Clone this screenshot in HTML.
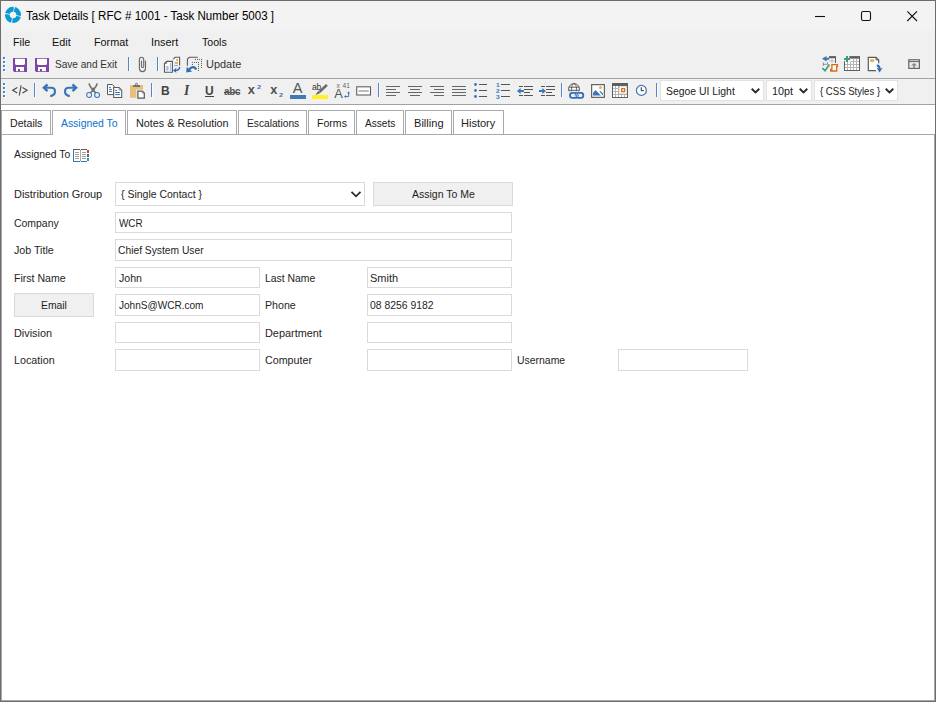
<!DOCTYPE html>
<html><head><meta charset="utf-8"><title>Task Details</title><style>
html,body{margin:0;padding:0;background:#fff;}
#w{position:relative;width:936px;height:702px;overflow:hidden;background:#fff;font-family:"Liberation Sans",sans-serif;}
.t{position:absolute;white-space:pre;line-height:16px;height:16px;transform-origin:0 0;}
.b{position:absolute;box-sizing:content-box;overflow:visible;}
</style></head><body><div id="w">
<div class="b" style="left:0px;top:0px;width:936px;height:31px;background:#f3f3f3;"></div>
<div class="b" style="left:0px;top:31px;width:936px;height:47px;background:#f0f0f0;"></div>
<div class="b" style="left:0px;top:78px;width:936px;height:1px;background:#a4a4a4;"></div>
<div class="b" style="left:0px;top:79px;width:936px;height:25px;background:#f0f0f0;"></div>
<div class="b" style="left:0px;top:104px;width:936px;height:1px;background:#a2a2a2;"></div>
<div class="b" style="left:2px;top:134px;width:932px;height:1px;background:#a9a9a9;"></div>
<span class="t" style="left:25.77px;top:7.67px;font-size:12.5px;color:#000;transform:scaleX(0.9258);">Task Details [ RFC # 1001 - Task Number 5003 ]</span>
<span class="t" style="left:12.82px;top:34.19px;font-size:11px;color:#111;transform:scaleX(0.9725);">File</span>
<span class="t" style="left:51.91px;top:34.19px;font-size:11px;color:#111;transform:scaleX(0.9833);">Edit</span>
<span class="t" style="left:93.52px;top:34.19px;font-size:11px;color:#111;transform:scaleX(0.9823);">Format</span>
<span class="t" style="left:150.81px;top:34.19px;font-size:11px;color:#111;transform:scaleX(0.9905);">Insert</span>
<span class="t" style="left:201.61px;top:34.19px;font-size:11px;color:#111;transform:scaleX(0.9622);">Tools</span>
<span class="t" style="left:54.94px;top:56.19px;font-size:11px;color:#333;transform:scaleX(0.9153);">Save and Exit</span>
<span class="t" style="left:206.20px;top:56.19px;font-size:11px;color:#333;transform:scaleX(0.9942);">Update</span>
<div class="b" style="left:1px;top:110px;width:48px;height:23px;background:#fff;border:1px solid #a9a9a9;"></div>
<span class="t" style="left:9.93px;top:115.19px;font-size:11px;color:#222;transform:scaleX(0.9645);">Details</span>
<div class="b" style="left:52px;top:110px;width:72px;height:24px;background:#fff;border:1px solid #a9a9a9;border-bottom:none"></div>
<span class="t" style="left:61.10px;top:115.19px;font-size:11px;color:#0a72d0;transform:scaleX(0.9444);">Assigned To</span>
<div class="b" style="left:127px;top:110px;width:108px;height:23px;background:#fff;border:1px solid #a9a9a9;"></div>
<span class="t" style="left:136.01px;top:115.19px;font-size:11px;color:#222;transform:scaleX(0.9838);">Notes &amp; Resolution</span>
<div class="b" style="left:238px;top:110px;width:67px;height:23px;background:#fff;border:1px solid #a9a9a9;"></div>
<span class="t" style="left:246.57px;top:115.19px;font-size:11px;color:#222;transform:scaleX(0.9273);">Escalations</span>
<div class="b" style="left:308px;top:110px;width:45px;height:23px;background:#fff;border:1px solid #a9a9a9;"></div>
<span class="t" style="left:316.74px;top:115.19px;font-size:11px;color:#222;transform:scaleX(0.9599);">Forms</span>
<div class="b" style="left:356px;top:110px;width:46px;height:23px;background:#fff;border:1px solid #a9a9a9;"></div>
<span class="t" style="left:365.30px;top:115.19px;font-size:11px;color:#222;transform:scaleX(0.9158);">Assets</span>
<div class="b" style="left:405px;top:110px;width:45px;height:23px;background:#fff;border:1px solid #a9a9a9;"></div>
<span class="t" style="left:413.59px;top:115.19px;font-size:11px;color:#222;transform:scaleX(1.0072);">Billing</span>
<div class="b" style="left:453px;top:110px;width:49px;height:23px;background:#fff;border:1px solid #a9a9a9;"></div>
<span class="t" style="left:460.80px;top:115.19px;font-size:11px;color:#222;transform:scaleX(1.0015);">History</span>
<span class="t" style="left:14.40px;top:146.19px;font-size:11px;color:#1e1e1e;transform:scaleX(0.9410);">Assigned To</span>
<span class="t" style="left:13.90px;top:186.19px;font-size:11px;color:#1e1e1e;transform:scaleX(0.9948);">Distribution Group</span>
<span class="t" style="left:13.88px;top:215.19px;font-size:11px;color:#1e1e1e;transform:scaleX(0.9495);">Company</span>
<span class="t" style="left:13.75px;top:242.19px;font-size:11px;color:#1e1e1e;transform:scaleX(0.9690);">Job Title</span>
<span class="t" style="left:13.84px;top:270.19px;font-size:11px;color:#1e1e1e;transform:scaleX(0.9580);">First Name</span>
<span class="t" style="left:13.61px;top:325.19px;font-size:11px;color:#1e1e1e;transform:scaleX(0.9878);">Division</span>
<span class="t" style="left:13.82px;top:352.19px;font-size:11px;color:#1e1e1e;transform:scaleX(0.9775);">Location</span>
<span class="t" style="left:265.15px;top:270.19px;font-size:11px;color:#1e1e1e;transform:scaleX(0.9459);">Last Name</span>
<span class="t" style="left:265.13px;top:297.19px;font-size:11px;color:#1e1e1e;transform:scaleX(0.9655);">Phone</span>
<span class="t" style="left:265.11px;top:325.19px;font-size:11px;color:#1e1e1e;transform:scaleX(0.9894);">Department</span>
<span class="t" style="left:265.47px;top:352.19px;font-size:11px;color:#1e1e1e;transform:scaleX(0.9727);">Computer</span>
<span class="t" style="left:516.74px;top:352.19px;font-size:11px;color:#1e1e1e;transform:scaleX(0.9484);">Username</span>
<div class="b" style="left:115px;top:182px;width:248px;height:22px;background:#fff;border:1px solid #dadada;"></div>
<div class="b" style="left:373px;top:182px;width:138px;height:22px;background:#f0f0f0;border:1px solid #dadada;"></div>
<div class="b" style="left:115px;top:212px;width:395px;height:19px;background:#fff;border:1px solid #dadada;"></div>
<div class="b" style="left:115px;top:239px;width:395px;height:20px;background:#fff;border:1px solid #dadada;"></div>
<div class="b" style="left:115px;top:267px;width:143px;height:19px;background:#fff;border:1px solid #dadada;"></div>
<div class="b" style="left:367px;top:267px;width:143px;height:19px;background:#fff;border:1px solid #dadada;"></div>
<div class="b" style="left:14px;top:293px;width:78px;height:22px;background:#f0f0f0;border:1px solid #dadada;"></div>
<div class="b" style="left:115px;top:294px;width:143px;height:20px;background:#fff;border:1px solid #dadada;"></div>
<div class="b" style="left:367px;top:294px;width:143px;height:20px;background:#fff;border:1px solid #dadada;"></div>
<div class="b" style="left:115px;top:322px;width:143px;height:19px;background:#fff;border:1px solid #dadada;"></div>
<div class="b" style="left:367px;top:322px;width:143px;height:19px;background:#fff;border:1px solid #dadada;"></div>
<div class="b" style="left:115px;top:349px;width:143px;height:20px;background:#fff;border:1px solid #dadada;"></div>
<div class="b" style="left:367px;top:349px;width:143px;height:20px;background:#fff;border:1px solid #dadada;"></div>
<div class="b" style="left:618px;top:349px;width:128px;height:20px;background:#fff;border:1px solid #dadada;"></div>
<span class="t" style="left:120.66px;top:186.19px;font-size:11px;color:#1e1e1e;transform:scaleX(0.9528);">{ Single Contact }</span>
<span class="t" style="left:411.90px;top:186.19px;font-size:11px;color:#1e1e1e;transform:scaleX(0.9564);">Assign To Me</span>
<span class="t" style="left:118.75px;top:215.19px;font-size:11px;color:#1e1e1e;transform:scaleX(0.9010);">WCR</span>
<span class="t" style="left:118.29px;top:242.19px;font-size:11px;color:#1e1e1e;transform:scaleX(0.9341);">Chief System User</span>
<span class="t" style="left:118.66px;top:270.19px;font-size:11px;color:#1e1e1e;transform:scaleX(0.9631);">John</span>
<span class="t" style="left:370.30px;top:270.19px;font-size:11px;color:#1e1e1e;transform:scaleX(0.9981);">Smith</span>
<span class="t" style="left:41.05px;top:297.19px;font-size:11px;color:#1e1e1e;transform:scaleX(0.9421);">Email</span>
<span class="t" style="left:118.66px;top:297.19px;font-size:11px;color:#1e1e1e;transform:scaleX(0.9127);">JohnS@WCR.com</span>
<span class="t" style="left:370.42px;top:297.19px;font-size:11px;color:#1e1e1e;transform:scaleX(0.9450);">08 8256 9182</span>
<svg class="b" style="left:350px;top:189px" width="12" height="10" viewBox="0 0 12 10"><path d="M1.5 2.8 L6 7.3 L10.5 2.8" fill="none" stroke="#2b2b2b" stroke-width="1.8"/></svg>
<svg class="b" style="left:3px;top:5px" width="20" height="20" viewBox="0 0 20 20"><circle cx="10" cy="9.95" r="5.7" fill="none" stroke="#0a9ad6" stroke-width="4.8"/><g fill="#f3f3f3"><path transform="rotate(0 10 9.95)" d="M10.1 6.9 L10.95 6.9 L11.35 4.3 L12.5 1.2 L10.7 1.2 L10.75 4 Z"/><path transform="rotate(90 10 9.95)" d="M10.1 6.9 L10.95 6.9 L11.35 4.3 L12.5 1.2 L10.7 1.2 L10.75 4 Z"/><path transform="rotate(180 10 9.95)" d="M10.1 6.9 L10.95 6.9 L11.35 4.3 L12.5 1.2 L10.7 1.2 L10.75 4 Z"/><path transform="rotate(270 10 9.95)" d="M10.1 6.9 L10.95 6.9 L11.35 4.3 L12.5 1.2 L10.7 1.2 L10.75 4 Z"/></g></svg>
<svg class="b" style="left:810px;top:6px" width="120" height="20" viewBox="0 0 120 20"><g fill="none" stroke="#111" stroke-width="1.1"><line x1="5" y1="10.5" x2="15" y2="10.5"/><rect x="51.5" y="5.5" width="9" height="9" rx="1.6"/><path d="M97.3 5.3 L107 15 M107 5.3 L97.3 15"/></g></svg>
<div class="b" style="left:3px;top:57px;width:2px;height:2px;background:#3f8ad8;"></div>
<div class="b" style="left:4px;top:59px;width:2px;height:1px;background:rgba(255,255,255,0.9);"></div>
<div class="b" style="left:5px;top:58px;width:1px;height:1px;background:rgba(255,255,255,0.9);"></div>
<div class="b" style="left:3px;top:61px;width:2px;height:2px;background:#3f8ad8;"></div>
<div class="b" style="left:4px;top:63px;width:2px;height:1px;background:rgba(255,255,255,0.9);"></div>
<div class="b" style="left:5px;top:62px;width:1px;height:1px;background:rgba(255,255,255,0.9);"></div>
<div class="b" style="left:3px;top:65px;width:2px;height:2px;background:#3f8ad8;"></div>
<div class="b" style="left:4px;top:67px;width:2px;height:1px;background:rgba(255,255,255,0.9);"></div>
<div class="b" style="left:5px;top:66px;width:1px;height:1px;background:rgba(255,255,255,0.9);"></div>
<div class="b" style="left:3px;top:69px;width:2px;height:2px;background:#3f8ad8;"></div>
<div class="b" style="left:4px;top:71px;width:2px;height:1px;background:rgba(255,255,255,0.9);"></div>
<div class="b" style="left:5px;top:70px;width:1px;height:1px;background:rgba(255,255,255,0.9);"></div>
<svg class="b" style="left:13px;top:58px" width="14" height="14" viewBox="0 0 14 14"><path d="M0 0H14V14H1.2L0 12.8Z" fill="#8144a8"/><path d="M2 0.8H12V6L11 7H3L2 6Z" fill="#fff"/><rect x="3" y="9" width="8" height="4.2" fill="#fff"/><rect x="5" y="11" width="2" height="2.2" fill="#8144a8"/></svg>
<svg class="b" style="left:35px;top:58px" width="14" height="14" viewBox="0 0 14 14"><path d="M0 0H14V14H1.2L0 12.8Z" fill="#8144a8"/><path d="M2 0.8H12V6L11 7H3L2 6Z" fill="#fff"/><rect x="3" y="9" width="8" height="4.2" fill="#fff"/><rect x="5" y="11" width="2" height="2.2" fill="#8144a8"/></svg>
<div class="b" style="left:129px;top:58px;width:1px;height:14px;background:rgba(255,255,255,0.75);"></div>
<div class="b" style="left:128px;top:57px;width:1px;height:14px;background:#5a82cd;"></div>
<div class="b" style="left:158px;top:58px;width:1px;height:14px;background:rgba(255,255,255,0.75);"></div>
<div class="b" style="left:157px;top:57px;width:1px;height:14px;background:#5a82cd;"></div>
<svg class="b" style="left:136px;top:55px" width="14" height="19" viewBox="0 0 14 19"><path d="M9.5 6 V13.6 a3.05 3.05 0 0 1 -6.1 0 V4.4 a2.15 2.15 0 0 1 4.3 0 V11.4 a1.1 1.1 0 0 1 -2.2 0 V6.1" fill="none" stroke="#6a6a6a" stroke-width="1.15" stroke-linecap="round"/></svg>
<svg class="b" style="left:163px;top:56px" width="19" height="18" viewBox="0 0 19 18"><path d="M10.3 3.2 L12.2 1.3 H16.6 V9.5" fill="#fff" stroke="#5a5a5a" stroke-width="1.1"/><rect x="13.2" y="3.1" width="1.8" height="1.8" fill="#e8a84c"/><rect x="12" y="6" width="3" height="1.8" fill="#e8a84c"/><rect x="11.2" y="9" width="3.8" height="0.8" fill="#999"/><path d="M1.5 16.2 V7.4 L3.6 5.3 H9.4 V16.2 Z" fill="#fff" stroke="#5a5a5a" stroke-width="1.15"/><path d="M3.7 5.5 V7.5 H1.7" fill="none" stroke="#5a5a5a" stroke-width="0.7"/><rect x="3.1" y="10" width="2.4" height="4.8" fill="#a9c4e4"/><rect x="6.8" y="7" width="1.2" height="7.8" fill="#a9c4e4"/><path d="M16.6 11 C16.6 13.6 15.3 14.4 12.2 14.4" fill="none" stroke="#2f6db5" stroke-width="1.5"/><path d="M10 14.4 L13.4 11.8 L12.8 14.4 L13.4 17 Z" fill="#2f6db5"/></svg>
<svg class="b" style="left:185px;top:56px" width="19" height="18" viewBox="0 0 19 18"><path d="M2.4 9.8 V3.2 L4.3 1.3 H12.8" fill="none" stroke="#5a5a5a" stroke-width="1.1"/><g fill="#555"><rect x="9.9" y="2.9" width="1" height="1"/><rect x="12.0" y="2.9" width="1" height="1"/><rect x="14.0" y="2.9" width="1" height="1"/><rect x="16.0" y="2.9" width="1" height="1"/><rect x="16.0" y="4.9" width="1" height="1"/><rect x="16.0" y="6.9" width="1" height="1"/><rect x="16.0" y="8.9" width="1" height="1"/><rect x="16.0" y="11.0" width="1" height="1"/><rect x="6.9" y="5.9" width="1" height="1"/><rect x="9.0" y="5.9" width="1" height="1"/><rect x="11.0" y="5.9" width="1" height="1"/><rect x="13.0" y="5.9" width="1" height="1"/><rect x="13.0" y="7.9" width="1" height="1"/><rect x="13.0" y="9.9" width="1" height="1"/><rect x="13.0" y="11.9" width="1" height="1"/><rect x="13.0" y="13.9" width="1" height="1"/><rect x="6.9" y="8.0" width="1" height="1"/></g><path d="M11.3 13.5 C9.8 10.3 6.2 10.1 3.6 14.2" fill="none" stroke="#2f6db5" stroke-width="2.2"/><path d="M1.2 16.6 L1.7 10.8 L4 13 L7.2 15.4 Z" fill="#2f6db5"/></svg>
<svg class="b" style="left:821px;top:55px" width="18" height="18" viewBox="0 0 18 18"><rect x="8" y="1.1" width="7" height="2.3" fill="#5e5e5e"/><path d="M14.5 3 V8" stroke="#5e5e5e" stroke-width="1"/><rect x="8.3" y="3.6" width="5.6" height="4.2" fill="#fff"/><path d="M8 6H14 M11 3.4V8" stroke="#aaa" stroke-width="0.8"/><path d="M2.3 7.3V11 M2.3 9.3H6.5 M6.5 7.3V9.3" stroke="#777" stroke-width="0.8" fill="none"/><path d="M1 3.7 L5.6 0.9 V2.7 H8.2 V4.7 H5.6 V6.5 Z" fill="#3a75b8"/><path d="M1.3 13 L4 15.7 L8.4 9.6" fill="none" stroke="#3f9a7c" stroke-width="1.7"/><path d="M10.9 14.5 V9.7 H16.4 V11.4 H15.7 V16 H9.7 V14.5 Z" fill="#fff" stroke="#e06a10" stroke-width="1.3"/></svg>
<svg class="b" style="left:843px;top:55px" width="18" height="18" viewBox="0 0 18 18"><rect x="1" y="3.5" width="16" height="12.5" fill="#b5b5b5"/><rect x="0" y="0" width="8" height="7" fill="#f0f0f0"/><rect x="6.3" y="1.1" width="10.7" height="2.4" fill="#5e5e5e"/><g fill="#fff"><rect x="8" y="4" width="2" height="2"/><rect x="11" y="4" width="2" height="2"/><rect x="14" y="4" width="2" height="2"/><rect x="2" y="7" width="2" height="2"/><rect x="5" y="7" width="2" height="2"/><rect x="8" y="7" width="2" height="2"/><rect x="11" y="7" width="2" height="2"/><rect x="14" y="7" width="2" height="2"/><rect x="2" y="10" width="2" height="2"/><rect x="5" y="10" width="2" height="2"/><rect x="8" y="10" width="2" height="2"/><rect x="11" y="10" width="2" height="2"/><rect x="14" y="10" width="2" height="2"/><rect x="2" y="13" width="2" height="2"/><rect x="5" y="13" width="2" height="2"/><rect x="8" y="13" width="2" height="2"/><rect x="11" y="13" width="2" height="2"/><rect x="14" y="13" width="2" height="2"/></g><path d="M1.5 6.2 V15.5 H16.5 V3" fill="none" stroke="#5e5e5e" stroke-width="1"/><path d="M1 3H7V5H1Z M3 1H5V7H3Z" fill="#3f9a7c"/></svg>
<svg class="b" style="left:867px;top:56px" width="17" height="18" viewBox="0 0 17 18"><path d="M1.3 1.3 H9 L11.7 4 V7.3 H9.5 V14.6 H1.3 Z" fill="#fff"/><path d="M11.7 7.3 V4 L9 1.3 H1.3 V14.6 H9" fill="none" stroke="#5a5a5a" stroke-width="1.2"/><path d="M9 1.3 V4 H11.7" fill="none" stroke="#5a5a5a" stroke-width="0.9"/><rect x="3.1" y="3.2" width="4.1" height="2.7" fill="#e8b256"/><path d="M9.8 9.4 C12.4 9.4 12.6 11 12.6 13" fill="none" stroke="#2f6db5" stroke-width="2"/><path d="M9.7 11.7 L12.6 16.4 L15.5 11.7 L12.6 12.9 Z" fill="#2f6db5"/></svg>
<svg class="b" style="left:907px;top:58px" width="15" height="12" viewBox="0 0 15 12"><rect x="1.8" y="3.6" width="10.6" height="6.6" fill="#e9e9e9"/><rect x="1.8" y="1.8" width="10.6" height="8.6" fill="none" stroke="#666" stroke-width="1.2"/><path d="M1.8 3.6H12.4" stroke="#666" stroke-width="1"/><path d="M7.1 5 L10 7.4 H7.9 V10 H6.3 V7.4 H4.2 Z" fill="#868686"/></svg>
<div class="b" style="left:3px;top:83px;width:2px;height:2px;background:#3f8ad8;"></div>
<div class="b" style="left:4px;top:85px;width:2px;height:1px;background:rgba(255,255,255,0.9);"></div>
<div class="b" style="left:5px;top:84px;width:1px;height:1px;background:rgba(255,255,255,0.9);"></div>
<div class="b" style="left:3px;top:87px;width:2px;height:2px;background:#3f8ad8;"></div>
<div class="b" style="left:4px;top:89px;width:2px;height:1px;background:rgba(255,255,255,0.9);"></div>
<div class="b" style="left:5px;top:88px;width:1px;height:1px;background:rgba(255,255,255,0.9);"></div>
<div class="b" style="left:3px;top:91px;width:2px;height:2px;background:#3f8ad8;"></div>
<div class="b" style="left:4px;top:93px;width:2px;height:1px;background:rgba(255,255,255,0.9);"></div>
<div class="b" style="left:5px;top:92px;width:1px;height:1px;background:rgba(255,255,255,0.9);"></div>
<div class="b" style="left:3px;top:95px;width:2px;height:2px;background:#3f8ad8;"></div>
<div class="b" style="left:4px;top:97px;width:2px;height:1px;background:rgba(255,255,255,0.9);"></div>
<div class="b" style="left:5px;top:96px;width:1px;height:1px;background:rgba(255,255,255,0.9);"></div>
<svg class="b" style="left:10px;top:83px" width="20" height="15" viewBox="0 0 20 15"><path d="M7.3 4.4 L2.7 7.2 L7.3 10 M11.1 2.3 L9.3 12.5 M12.5 4.4 L17.1 7.2 L12.5 10" fill="none" stroke="#484848" stroke-width="1.15"/></svg>
<div class="b" style="left:35px;top:84px;width:1px;height:14px;background:rgba(255,255,255,0.75);"></div>
<div class="b" style="left:34px;top:83px;width:1px;height:14px;background:#5a82cd;"></div>
<svg class="b" style="left:41px;top:82px" width="16" height="16" viewBox="0 0 16 16"><g fill="none" stroke="#3a75b8"><path d="M6.5 2.5 L2.9 5.8 L6.5 9.1" stroke-width="2.4"/><path d="M3 5.8 H10.3 C13.2 5.8 14 7.8 14 9.6 C14 12 12 13.7 9.2 14.1" stroke-width="2.1"/></g></svg>
<svg class="b" style="left:63px;top:82px" width="16" height="16" viewBox="0 0 16 16"><g transform="translate(16,0) scale(-1,1)" fill="none" stroke="#3a75b8"><path d="M6.5 2.5 L2.9 5.8 L6.5 9.1" stroke-width="2.4"/><path d="M3 5.8 H10.3 C13.2 5.8 14 7.8 14 9.6 C14 12 12 13.7 9.2 14.1" stroke-width="2.1"/></g></svg>
<svg class="b" style="left:85px;top:82px" width="17" height="17" viewBox="0 0 17 17"><path d="M4 1.3 C4.6 4 7 7.2 10.8 10.9 M12.2 1.3 C11.6 4 9.2 7.2 5.4 10.9" fill="none" stroke="#6e6e6e" stroke-width="1.6"/><ellipse cx="8.1" cy="7.4" rx="1.5" ry="2" fill="#6e6e6e"/><circle cx="4.1" cy="13" r="2.45" fill="none" stroke="#3a75b8" stroke-width="1.05"/><circle cx="12.1" cy="13" r="2.45" fill="none" stroke="#3a75b8" stroke-width="1.05"/></svg>
<svg class="b" style="left:106px;top:83px" width="17" height="16" viewBox="0 0 17 16"><path d="M1.5 1.5 H6.4 L8 3.1 V11.6 H1.5 Z" fill="#fff" stroke="#5a5a5a" stroke-width="1"/><path d="M3 4.4H4.8 M3 6.4H5.9 M3 8.4H5.9" stroke="#2f6db5" stroke-width="1"/><path d="M7.7 4.5 H13 L15.7 7.2 V14.5 H7.7 Z" fill="#fff" stroke="#5a5a5a" stroke-width="1.05"/><path d="M13 4.7 V7.2 H15.5" fill="none" stroke="#777" stroke-width="0.7"/><path d="M9.2 7.5H11 M9.2 9.5H13.9 M9.2 11.6H13.9" stroke="#2f6db5" stroke-width="1"/></svg>
<svg class="b" style="left:129px;top:82px" width="17" height="18" viewBox="0 0 17 18"><rect x="1" y="3.1" width="13" height="12.7" fill="#e8bf7a"/><path d="M6.6 3.2 V2.1 a0.9 0.9 0 0 1 1.8 0 V3.2" fill="none" stroke="#6a6a6a" stroke-width="0.9"/><rect x="4.1" y="3.1" width="7" height="1.8" fill="#6a6a6a"/><path d="M8.9 9 H13.2 L15.3 11.1 V16 H8.9 Z" fill="#f0f0f0" stroke="#f0f0f0" stroke-width="3.2"/><path d="M8.9 9 H13.2 L15.3 11.1 V16 H8.9 Z" fill="#fff" stroke="#5a5a5a" stroke-width="1.25"/><path d="M13.2 9.2 V11.1 H15.1" fill="none" stroke="#777" stroke-width="0.7"/></svg>
<div class="b" style="left:152px;top:84px;width:1px;height:14px;background:rgba(255,255,255,0.75);"></div>
<div class="b" style="left:151px;top:83px;width:1px;height:14px;background:#5a82cd;"></div>
<span class="t" style="left:161px;top:82.5px;font-size:12px;font-weight:bold;color:#444;">B</span>
<span class="t" style="left:184.2px;top:83.2px;font-size:15px;font-weight:bold;font-style:italic;color:#444;transform:scale(0.91);font-family:'Liberation Serif',serif;">I</span>
<span class="t" style="left:205px;top:82.5px;font-size:12px;font-weight:bold;color:#444;letter-spacing:-0.3px">U</span>
<div class="b" style="left:205px;top:96px;width:9px;height:1px;background:#444;"></div>
<span class="t" style="left:224px;top:83.6px;font-size:10px;font-weight:bold;color:#555;letter-spacing:-0.35px;text-decoration:line-through">abc</span>
<span class="t" style="left:247.8px;top:82.2px;font-size:12.8px;font-weight:bold;color:#505050;">x</span>
<span class="t" style="left:256.7px;top:79px;font-size:6.2px;font-weight:bold;color:#3a75b8;transform:scaleX(1.2)">2</span>
<span class="t" style="left:270.2px;top:82.2px;font-size:12.8px;font-weight:bold;color:#505050;">x</span>
<span class="t" style="left:278.8px;top:87px;font-size:6px;font-weight:bold;color:#3a75b8;transform:scaleX(1.2)">2</span>
<span class="t" style="left:292.7px;top:80.2px;font-size:14.5px;color:#555;">A</span>
<div class="b" style="left:290px;top:95px;width:16px;height:4px;background:#4178b8;"></div>
<span class="t" style="left:312px;top:79.3px;font-size:8.6px;color:#333;letter-spacing:-0.3px">ab</span>
<svg class="b" style="left:314px;top:83px" width="16" height="13" viewBox="0 0 16 13"><path d="M12.9 1.9 L5.6 8.9" stroke="#686868" stroke-width="2.7" stroke-linecap="butt"/><path d="M4.3 7.9 L6.3 10 L1.4 11.9Z" fill="#5a5a5a"/></svg>
<div class="b" style="left:312px;top:95px;width:16px;height:4px;background:#fff21f;"></div>
<span class="t" style="left:334.3px;top:86.1px;font-size:12.8px;color:#555;">A</span>
<span class="t" style="left:336.6px;top:78.2px;font-size:6.6px;color:#6a6a6a;">x</span>
<span class="t" style="left:342.5px;top:78.4px;font-size:6.6px;color:#5e5e5e;">41</span>
<svg class="b" style="left:343px;top:89.7px" width="9" height="10" viewBox="0 0 9 10"><path d="M5.6 2.6 V6.6 H2.2" fill="none" stroke="#3a75b8" stroke-width="1"/><path d="M4.1 3.3 L5.6 1.4 L7.1 3.3Z M2.8 5.1 L1 6.6 L2.8 8.1Z" fill="#3a75b8"/></svg>
<svg class="b" style="left:355px;top:85px" width="18" height="12" viewBox="0 0 18 12"><rect x="1.7" y="1.8" width="13.8" height="8.2" fill="#fdfdfd" stroke="#5c5c5c" stroke-width="1.05"/><path d="M3.5 6H13.7" stroke="#9a9a9a" stroke-width="1.3"/></svg>
<div class="b" style="left:379px;top:84px;width:1px;height:14px;background:rgba(255,255,255,0.75);"></div>
<div class="b" style="left:378px;top:83px;width:1px;height:14px;background:#5a82cd;"></div>
<div class="b" style="left:386px;top:86px;width:14px;height:1px;background:#666;"></div>
<div class="b" style="left:408px;top:86px;width:14px;height:1px;background:#666;"></div>
<div class="b" style="left:430px;top:86px;width:14px;height:1px;background:#666;"></div>
<div class="b" style="left:452px;top:86px;width:14px;height:1px;background:#666;"></div>
<div class="b" style="left:386px;top:89px;width:10px;height:1px;background:#666;"></div>
<div class="b" style="left:410px;top:89px;width:10px;height:1px;background:#666;"></div>
<div class="b" style="left:434px;top:89px;width:10px;height:1px;background:#666;"></div>
<div class="b" style="left:452px;top:89px;width:14px;height:1px;background:#666;"></div>
<div class="b" style="left:386px;top:92px;width:14px;height:1px;background:#666;"></div>
<div class="b" style="left:408px;top:92px;width:14px;height:1px;background:#666;"></div>
<div class="b" style="left:430px;top:92px;width:14px;height:1px;background:#666;"></div>
<div class="b" style="left:452px;top:92px;width:14px;height:1px;background:#666;"></div>
<div class="b" style="left:386px;top:95px;width:10px;height:1px;background:#666;"></div>
<div class="b" style="left:410px;top:95px;width:10px;height:1px;background:#666;"></div>
<div class="b" style="left:434px;top:95px;width:10px;height:1px;background:#666;"></div>
<div class="b" style="left:452px;top:95px;width:14px;height:1px;background:#666;"></div>
<svg class="b" style="left:473.8px;top:83px" width="3" height="3" viewBox="0 0 3 3"><circle cx="1.5" cy="1.5" r="1.4" fill="#3a75b8"/></svg>
<div class="b" style="left:479px;top:84px;width:8px;height:1px;background:#555;"></div>
<div class="b" style="left:501px;top:84px;width:9px;height:1px;background:#555;"></div>
<svg class="b" style="left:473.8px;top:89px" width="3" height="3" viewBox="0 0 3 3"><circle cx="1.5" cy="1.5" r="1.4" fill="#3a75b8"/></svg>
<div class="b" style="left:479px;top:90px;width:8px;height:1px;background:#555;"></div>
<div class="b" style="left:501px;top:90px;width:9px;height:1px;background:#555;"></div>
<svg class="b" style="left:473.8px;top:95px" width="3" height="3" viewBox="0 0 3 3"><circle cx="1.5" cy="1.5" r="1.4" fill="#3a75b8"/></svg>
<div class="b" style="left:479px;top:96px;width:8px;height:1px;background:#555;"></div>
<div class="b" style="left:501px;top:96px;width:9px;height:1px;background:#555;"></div>
<span class="t" style="left:495.6px;top:77.3px;font-size:5.8px;font-weight:bold;color:#3a75b8;transform:scaleX(1.15)">1</span>
<span class="t" style="left:495.6px;top:83.3px;font-size:5.8px;font-weight:bold;color:#3a75b8;transform:scaleX(1.15)">2</span>
<span class="t" style="left:495.6px;top:89.3px;font-size:5.8px;font-weight:bold;color:#3a75b8;transform:scaleX(1.15)">3</span>
<div class="b" style="left:519px;top:86px;width:4px;height:1px;background:#555;"></div>
<div class="b" style="left:524px;top:86px;width:9px;height:1px;background:#555;"></div>
<div class="b" style="left:541px;top:86px;width:4px;height:1px;background:#555;"></div>
<div class="b" style="left:546px;top:86px;width:9px;height:1px;background:#555;"></div>
<div class="b" style="left:519px;top:95px;width:4px;height:1px;background:#555;"></div>
<div class="b" style="left:524px;top:95px;width:9px;height:1px;background:#555;"></div>
<div class="b" style="left:541px;top:95px;width:4px;height:1px;background:#555;"></div>
<div class="b" style="left:546px;top:95px;width:9px;height:1px;background:#555;"></div>
<div class="b" style="left:524px;top:89px;width:9px;height:1px;background:#555;"></div>
<div class="b" style="left:524px;top:92px;width:6px;height:1px;background:#555;"></div>
<div class="b" style="left:546px;top:89px;width:9px;height:1px;background:#555;"></div>
<div class="b" style="left:546px;top:92px;width:6px;height:1px;background:#555;"></div>
<svg class="b" style="left:516px;top:87px" width="9" height="8" viewBox="0 0 9 8"><path d="M0.9 3.9 L4.6 0.9 V2.9 H7.9 V4.9 H4.6 V6.9 Z" fill="#3a75b8"/></svg>
<svg class="b" style="left:538px;top:87px" width="9" height="8" viewBox="0 0 9 8"><path d="M8 3.9 L4.3 0.9 V2.9 H1 V4.9 H4.3 V6.9 Z" fill="#3a75b8"/></svg>
<div class="b" style="left:562px;top:84px;width:1px;height:14px;background:rgba(255,255,255,0.75);"></div>
<div class="b" style="left:561px;top:83px;width:1px;height:14px;background:#5a82cd;"></div>
<svg class="b" style="left:566px;top:82px" width="20" height="18" viewBox="0 0 20 18"><circle cx="8" cy="7" r="5.4" fill="#fff" stroke="#5a5a5a" stroke-width="1"/><ellipse cx="8" cy="7" rx="2.5" ry="5.4" fill="none" stroke="#5a5a5a" stroke-width="0.9"/><path d="M2.9 5.2H13.1 M2.7 8.3H13.3" stroke="#5a5a5a" stroke-width="1"/><rect x="1.5" y="9.4" width="18" height="8.3" fill="#f0f0f0"/><rect x="4" y="10.8" width="7.4" height="5" rx="2.4" fill="none" stroke="#2f6db5" stroke-width="1.8"/><rect x="10" y="10.8" width="7.3" height="5" rx="2.4" fill="none" stroke="#2f6db5" stroke-width="1.8"/><path d="M8.8 13.3 H12.6" stroke="#2f6db5" stroke-width="2.2"/><path d="M9.2 15 L10.6 11.6 M11 15 L12.4 11.6" stroke="#eef2f8" stroke-width="0.7"/></svg>
<svg class="b" style="left:590px;top:83px" width="16" height="16" viewBox="0 0 16 16"><rect x="1.65" y="1.65" width="12.7" height="12.7" fill="#fff" stroke="#5a5a5a" stroke-width="1.15"/><circle cx="10.5" cy="4.6" r="1.5" fill="#e8b256"/><path d="M3 12.6 V10 L5.4 7 L11 12.6 Z" fill="#3a75b8"/><path d="M9.4 8.6 L10.4 8 L13 10.6 V12.6 Z" fill="#3a75b8"/></svg>
<svg class="b" style="left:611px;top:82px" width="18" height="17" viewBox="0 0 18 17"><rect x="1" y="1" width="16" height="15" fill="#b5b5b5"/><rect x="1" y="1" width="16" height="3" fill="#5e5e5e"/><g fill="#fff"><rect x="2" y="4" width="2" height="2"/><rect x="5" y="4" width="2" height="2"/><rect x="8" y="4" width="2" height="2"/><rect x="11" y="4" width="2" height="2"/><rect x="14" y="4" width="2" height="2"/><rect x="2" y="7" width="2" height="2"/><rect x="5" y="7" width="2" height="2"/><rect x="8" y="7" width="2" height="2"/><rect x="11" y="7" width="2" height="2"/><rect x="14" y="7" width="2" height="2"/><rect x="2" y="10" width="2" height="2"/><rect x="5" y="10" width="2" height="2"/><rect x="8" y="10" width="2" height="2"/><rect x="11" y="10" width="2" height="2"/><rect x="14" y="10" width="2" height="2"/><rect x="2" y="13" width="2" height="2"/><rect x="5" y="13" width="2" height="2"/><rect x="8" y="13" width="2" height="2"/><rect x="11" y="13" width="2" height="2"/><rect x="14" y="13" width="2" height="2"/></g><rect x="8" y="4" width="8" height="8" fill="#fff"/><rect x="8.3" y="4.3" width="7.4" height="7.4" fill="none" stroke="#999" stroke-width="0.7" stroke-dasharray="1 1"/><rect x="10.7" y="6.7" width="2.9" height="2.9" fill="#fff" stroke="#e06a10" stroke-width="1.3"/><rect x="1.5" y="1.5" width="15" height="14" fill="none" stroke="#5e5e5e" stroke-width="1"/></svg>
<svg class="b" style="left:634px;top:83px" width="15" height="15" viewBox="0 0 15 15"><circle cx="7.4" cy="7.4" r="4.95" fill="#fff" stroke="#3a75b8" stroke-width="1.2"/><path d="M7.4 4.2 V7.7 H9.9" fill="none" stroke="#555" stroke-width="1.3"/></svg>
<div class="b" style="left:657px;top:84px;width:1px;height:14px;background:rgba(255,255,255,0.75);"></div>
<div class="b" style="left:656px;top:83px;width:1px;height:14px;background:#5a82cd;"></div>
<div class="b" style="left:660px;top:80px;width:102px;height:19px;background:#fff;border:1px solid #e2e2e2;"></div>
<div class="b" style="left:766px;top:80px;width:44px;height:19px;background:#fff;border:1px solid #e2e2e2;"></div>
<div class="b" style="left:814px;top:80px;width:82px;height:19px;background:#fff;border:1px solid #e2e2e2;"></div>
<span class="t" style="left:665.95px;top:83.02px;font-size:11.5px;color:#222;transform:scaleX(0.9040);">Segoe UI Light</span>
<span class="t" style="left:772.30px;top:83.02px;font-size:11.5px;color:#222;transform:scaleX(0.9395);">10pt</span>
<span class="t" style="left:819.98px;top:83.02px;font-size:11.5px;color:#222;transform:scaleX(0.8317);">{ CSS Styles }</span>
<svg class="b" style="left:749.7px;top:86.5px" width="11" height="8" viewBox="0 0 11 8"><path d="M1.7 1.8 L5.5 5.5 L9.3 1.8" fill="none" stroke="#2b2b2b" stroke-width="1.9"/></svg>
<svg class="b" style="left:797.8px;top:86.5px" width="11" height="8" viewBox="0 0 11 8"><path d="M1.7 1.8 L5.5 5.5 L9.3 1.8" fill="none" stroke="#2b2b2b" stroke-width="1.9"/></svg>
<svg class="b" style="left:883.7px;top:86.5px" width="11" height="8" viewBox="0 0 11 8"><path d="M1.7 1.8 L5.5 5.5 L9.3 1.8" fill="none" stroke="#2b2b2b" stroke-width="1.9"/></svg>
<svg class="b" style="left:73px;top:149px" width="17" height="13" viewBox="0 0 17 13"><rect x="0" y="0" width="14" height="12.5" fill="#fff"/><rect x="0" y="0" width="7" height="1" fill="#5a5a5a"/><rect x="8" y="0" width="6" height="1" fill="#5a5a5a"/><rect x="0" y="1" width="1" height="11.5" fill="#3a75b8"/><rect x="0" y="12" width="7" height="1" fill="#3a75b8"/><rect x="8" y="12" width="6" height="1" fill="#3a75b8"/><rect x="7.2" y="0.5" width="0.7" height="12" fill="#8a8a8a"/><g fill="#a0a0a0"><rect x="2" y="3" width="4" height="1"/><rect x="2" y="5" width="4" height="1"/><rect x="2" y="7" width="4" height="1"/><rect x="2" y="9" width="4" height="1"/><rect x="9" y="3" width="4" height="1"/><rect x="9" y="5" width="4" height="1"/><rect x="9" y="7" width="4" height="1"/><rect x="9" y="9" width="4" height="1"/></g><rect x="14" y="1" width="2" height="3" fill="#d4401a"/><rect x="14" y="5" width="2" height="3" fill="#2f6db5"/><rect x="14" y="9" width="2" height="3" fill="#3f9a7c"/></svg>
<div class="b" style="left:1px;top:134px;width:1px;height:567px;background:#a6a6a6;"></div>
<div class="b" style="left:934px;top:134px;width:1px;height:567px;background:#a6a6a6;"></div>
<div class="b" style="left:1px;top:700px;width:934px;height:1px;background:#a6a6a6;"></div>
<div class="b" style="left:0px;top:0px;width:936px;height:1px;background:#6d6d6d;"></div>
<div class="b" style="left:0px;top:0px;width:1px;height:702px;background:#6d6d6d;"></div>
<div class="b" style="left:935px;top:0px;width:1px;height:702px;background:#6d6d6d;"></div>
<div class="b" style="left:0px;top:701px;width:936px;height:1px;background:#6d6d6d;"></div>
</div></body></html>
